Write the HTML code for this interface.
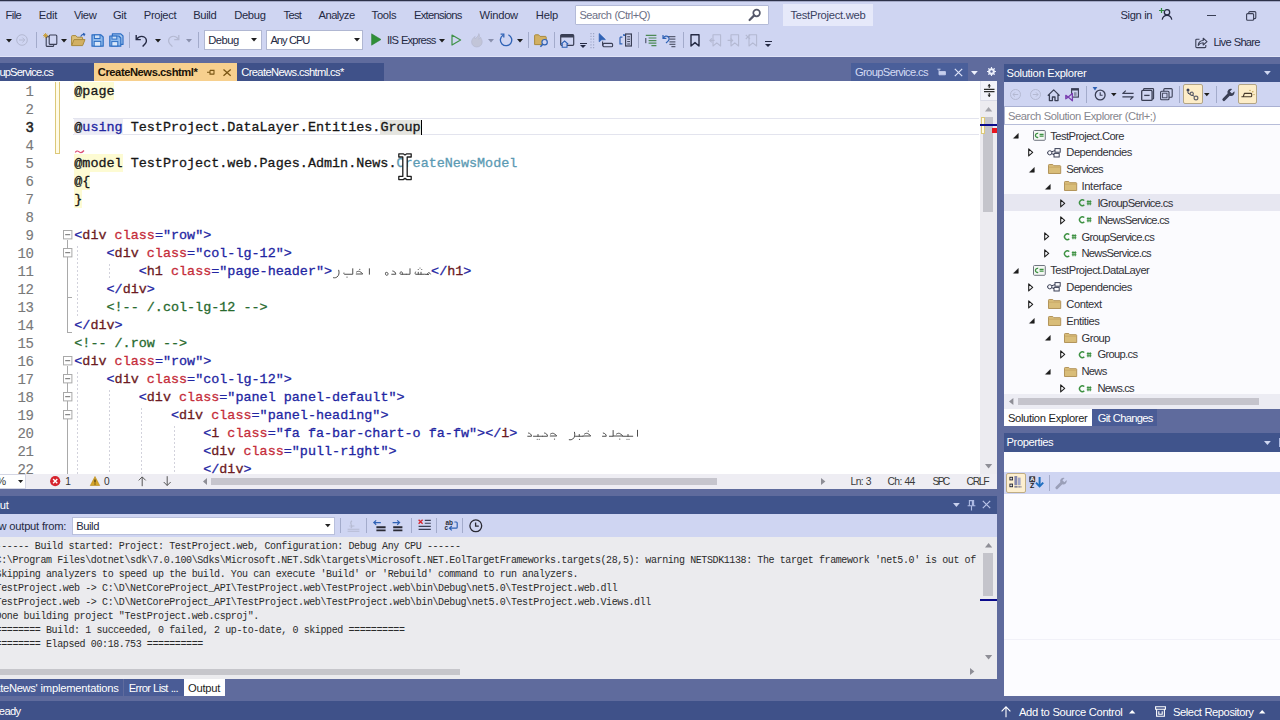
<!DOCTYPE html>
<html>
<head>
<meta charset="utf-8">
<title>TestProject.web - Microsoft Visual Studio</title>
<style>
*{box-sizing:border-box;margin:0;padding:0}
html,body{width:1280px;height:720px;overflow:hidden;background:#5f6b9d;font-family:"Liberation Sans",sans-serif;font-size:12px;color:#1e1e1e}
body{position:relative}
.a{position:absolute;display:block}
.t{position:absolute;white-space:pre;overflow:visible}
svg{overflow:visible}
.ln{position:absolute;left:0;width:33.6px;text-align:right;font-family:"Liberation Mono",monospace;font-size:14px;letter-spacing:-0.3px;color:#787878;height:18px;line-height:18px;margin-top:1px;-webkit-text-stroke:0.12px currentColor}
.cl{position:absolute;left:74px;height:18px;line-height:18px;font-family:"Liberation Mono",monospace;font-size:13.43px;white-space:pre;color:#161616;-webkit-text-stroke:0.3px currentColor}
.cl span{-webkit-text-stroke:0.3px currentColor}
.b{color:#2225a2}.m{color:#6b1a22}.r{color:#c52c3a}.g{color:#276a2e}.tl{color:#5b9ab3}
.hl{background:#fbf7dc}
.ol{position:absolute;left:-15.6px;height:14px;line-height:14px;font-family:"Liberation Mono",monospace;font-size:10px;letter-spacing:-0.4px;white-space:pre;color:#2a2a2a}
</style>
</head>
<body>
<!-- s_top -->
<div class="a" style="left:0px;top:0px;width:1280px;height:57px;background:#cfd5f2;"></div>
<div class="a" style="left:0px;top:0px;width:1280px;height:1px;background:#2d3149;"></div>
<div class="a" style="left:0px;top:1px;width:1280px;height:1px;background:#a4aac8;"></div>
<div class="a" style="left:0px;top:56px;width:1280px;height:1px;background:#dfe3f7;"></div>
<div class="t" style="left:5.60px;top:7.00px;height:16px;line-height:16px;font-size:11.2px;color:#252a44;letter-spacing:-0.611px;">File</div>
<div class="t" style="left:38.80px;top:7.00px;height:16px;line-height:16px;font-size:11.2px;color:#252a44;letter-spacing:-0.275px;">Edit</div>
<div class="t" style="left:74.00px;top:7.00px;height:16px;line-height:16px;font-size:11.2px;color:#252a44;letter-spacing:-0.443px;">View</div>
<div class="t" style="left:113.00px;top:7.00px;height:16px;line-height:16px;font-size:11.2px;color:#252a44;letter-spacing:-0.337px;">Git</div>
<div class="t" style="left:143.80px;top:7.00px;height:16px;line-height:16px;font-size:11.2px;color:#252a44;letter-spacing:-0.351px;">Project</div>
<div class="t" style="left:193.20px;top:7.00px;height:16px;line-height:16px;font-size:11.2px;color:#252a44;letter-spacing:-0.361px;">Build</div>
<div class="t" style="left:234.20px;top:7.00px;height:16px;line-height:16px;font-size:11.2px;color:#252a44;letter-spacing:-0.320px;">Debug</div>
<div class="t" style="left:283.60px;top:7.00px;height:16px;line-height:16px;font-size:11.2px;color:#252a44;letter-spacing:-0.710px;">Test</div>
<div class="t" style="left:318.60px;top:7.00px;height:16px;line-height:16px;font-size:11.2px;color:#252a44;letter-spacing:-0.549px;">Analyze</div>
<div class="t" style="left:371.60px;top:7.00px;height:16px;line-height:16px;font-size:11.2px;color:#252a44;letter-spacing:-0.269px;">Tools</div>
<div class="t" style="left:414.00px;top:7.00px;height:16px;line-height:16px;font-size:11.2px;color:#252a44;letter-spacing:-0.718px;">Extensions</div>
<div class="t" style="left:479.60px;top:7.00px;height:16px;line-height:16px;font-size:11.2px;color:#252a44;letter-spacing:-0.239px;">Window</div>
<div class="t" style="left:535.80px;top:7.00px;height:16px;line-height:16px;font-size:11.2px;color:#252a44;letter-spacing:-0.208px;">Help</div>
<div class="a" style="left:575px;top:4.8px;width:193.5px;height:19.8px;background:#ffffff;border:1px solid #b4bbd8;border-radius:1px"></div>
<div class="t" style="left:579.50px;top:7.50px;height:15px;line-height:15px;font-size:11px;color:#6d7086;letter-spacing:-0.474px;word-spacing:0.284px;">Search (Ctrl+Q)</div>
<svg class="a" style="left:748px;top:8px;" width="14" height="14" viewBox="0 0 14 14"><circle cx="8.6" cy="5" r="3.3" fill="none" stroke="#55586a" stroke-width="1.7"/><path d="M6.2 7.4 L1.6 12" stroke="#55586a" stroke-width="2.2" stroke-linecap="round"/></svg>
<div class="a" style="left:783px;top:4px;width:89.5px;height:22px;background:#e6e9fa;"></div>
<div class="t" style="left:790.50px;top:7.30px;height:16px;line-height:16px;font-size:11.2px;color:#3a4262;letter-spacing:-0.270px;">TestProject.web</div>
<div class="t" style="left:1120.60px;top:7.00px;height:16px;line-height:16px;font-size:11.2px;color:#252a44;letter-spacing:-0.444px;word-spacing:0.267px;">Sign in</div>
<svg class="a" style="left:1158px;top:7px;" width="15" height="14" viewBox="0 0 15 14"><path d="M3.5 1v5M1 3.5h5" stroke="#2e8b3d" stroke-width="1.2"/><circle cx="9" cy="5.3" r="2.7" fill="none" stroke="#252a44" stroke-width="1.3"/><path d="M4.2 12.6c.6-3 2.6-4.2 4.8-4.2s4.2 1.2 4.8 4.2" fill="none" stroke="#252a44" stroke-width="1.3"/></svg>
<div class="a" style="left:1206.5px;top:15px;width:9px;height:1.2px;background:#3a3f55;"></div>
<svg class="a" style="left:1246px;top:11px;" width="11" height="10" viewBox="0 0 11 10"><rect x="0.6" y="2.6" width="7" height="6.6" rx="1" fill="none" stroke="#3a3f55" stroke-width="1.1"/><path d="M2.8 2.4V1.6a1 1 0 0 1 1-1h5a1 1 0 0 1 1 1v5a1 1 0 0 1-1 1H7.8" fill="none" stroke="#3a3f55" stroke-width="1.1"/></svg>
<svg class="a" style="left:1195px;top:36px;" width="13" height="13" viewBox="0 0 13 13"><path d="M4.5 3.2H1.7a.9.9 0 0 0-.9.9v6.6a.9.9 0 0 0 .9.9h8.2a.9.9 0 0 0 .9-.9V9" fill="none" stroke="#3a3f55" stroke-width="1.1"/><path d="M3.2 9.4c.3-3 2.2-4.8 5-4.9V2.2L12 5.6 8.2 9V6.8C6 6.8 4.4 7.6 3.2 9.4z" fill="none" stroke="#3a3f55" stroke-width="1.1" stroke-linejoin="round"/></svg>
<div class="t" style="left:1213.40px;top:33.60px;height:16px;line-height:16px;font-size:11.2px;color:#252a44;letter-spacing:-0.760px;word-spacing:0.456px;">Live Share</div>
<div class="a" style="left:0;top:-1px;width:1280px;height:0"><svg class="a" style="left:5.80px;top:39.75px" width="6" height="3.5" viewBox="0 0 6 3.5"><path d="M0 0h6L3 3.5z" fill="#1e1e1e"/></svg>
<svg class="a" style="left:16px;top:35px;" width="12" height="12" viewBox="0 0 12 12"><circle cx="6" cy="6" r="5.3" fill="none" stroke="#b4b9d2" stroke-width="1"/><path d="M3 6h5.6M6.4 3.6 8.8 6 6.4 8.4" fill="none" stroke="#b4b9d2" stroke-width="1"/></svg>
<div class="a" style="left:36px;top:32.5px;width:1px;height:16px;background:#a3abcb;"></div>
<svg class="a" style="left:43px;top:33.5px;" width="15" height="15" viewBox="0 0 15 15"><rect x="3.2" y="3.8" width="7.5" height="9.6" rx="1" fill="#cfd5f2" stroke="#3a3f55" stroke-width="1.1"/><rect x="6.2" y="2" width="7.6" height="9.4" rx="1" fill="#cfd5f2" stroke="#3a3f55" stroke-width="1.1"/><path d="M2.6 0v5.2M0 2.6h5.2M.8.8l3.6 3.6M4.4.8.8 4.4" stroke="#c89b2c" stroke-width="0.9"/></svg>
<svg class="a" style="left:61.00px;top:39.75px" width="6" height="3.5" viewBox="0 0 6 3.5"><path d="M0 0h6L3 3.5z" fill="#1e1e1e"/></svg>
<svg class="a" style="left:71px;top:34px;" width="15" height="14" viewBox="0 0 15 14"><path d="M.6 12.4V3.4a.8.8 0 0 1 .8-.8h3.4l1.4 1.6h4.6a.8.8 0 0 1 .8.8v1.6" fill="#dcc07a" stroke="#a98a3d" stroke-width="1"/><path d="M.7 12.6 3 6.6h11l-2.4 6z" fill="#d2b063" stroke="#a98a3d" stroke-width="1" stroke-linejoin="round"/><path d="M9.6 3.4c1-1.8 2.4-2.4 4-2.2M12 .2l1.8 1-1 1.8" fill="none" stroke="#2f62b5" stroke-width="1.1"/></svg>
<svg class="a" style="left:90.5px;top:34.5px;" width="13" height="13" viewBox="0 0 13 13"><path d="M1 .8h9l2.2 2.2v9.2H1z" fill="#8fbaec" stroke="#2f6fc4" stroke-width="1.2" stroke-linejoin="round"/><rect x="3.4" y=".9" width="5.6" height="3.6" fill="#cfe0f7" stroke="#2f6fc4" stroke-width="1"/><rect x="3.2" y="7.4" width="6.6" height="4.8" fill="#dbe8fa" stroke="#2f6fc4" stroke-width="1"/></svg>
<svg class="a" style="left:109px;top:34px;" width="15" height="14" viewBox="0 0 15 14"><path d="M3.4.8h8.4L14 3v8.4H3.4z" fill="#a9c9f1" stroke="#2f6fc4" stroke-width="1.2" stroke-linejoin="round"/><path d="M.8 3h9l2 2v8.2H.8z" fill="#8fbaec" stroke="#2f6fc4" stroke-width="1.2" stroke-linejoin="round"/><rect x="3" y="3.1" width="4.8" height="3" fill="#cfe0f7" stroke="#2f6fc4" stroke-width="1"/><rect x="2.8" y="8.6" width="6" height="4.4" fill="#dbe8fa" stroke="#2f6fc4" stroke-width="1"/></svg>
<div class="a" style="left:129px;top:32.5px;width:1px;height:16px;background:#a3abcb;"></div>
<svg class="a" style="left:135px;top:34.5px;" width="13" height="13" viewBox="0 0 13 13"><path d="M1.2 1v4.6h4.6" fill="none" stroke="#252a44" stroke-width="1.4"/><path d="M1.6 5.2C3.4 2.6 6.6 1.6 9.2 3c2.6 1.4 2.8 4.6 1.2 6.6L7.6 12.6" fill="none" stroke="#252a44" stroke-width="1.4"/></svg>
<svg class="a" style="left:155.00px;top:39.75px" width="6" height="3.5" viewBox="0 0 6 3.5"><path d="M0 0h6L3 3.5z" fill="#1e1e1e"/></svg>
<svg class="a" style="left:167px;top:34.5px;" width="13" height="13" viewBox="0 0 13 13"><path d="M11.8 1v4.6H7.2" fill="none" stroke="#b4b9d2" stroke-width="1.3"/><path d="M11.4 5.2C9.6 2.6 6.4 1.6 3.8 3 1.2 4.4 1 7.600000000000001 2.6 9.6L5.4 12.6" fill="none" stroke="#b4b9d2" stroke-width="1.3"/></svg>
<svg class="a" style="left:186.00px;top:39.75px" width="6" height="3.5" viewBox="0 0 6 3.5"><path d="M0 0h6L3 3.5z" fill="#8a90ad"/></svg>
<div class="a" style="left:197.5px;top:32.5px;width:1px;height:16px;background:#a3abcb;"></div>
<div class="a" style="left:204px;top:31px;width:57.5px;height:19.5px;background:#ffffff;border:1px solid #b0b7d2"></div>
<div class="t" style="left:208.20px;top:32.60px;height:16px;line-height:16px;font-size:11.2px;color:#252a44;letter-spacing:-0.480px;">Debug</div>
<svg class="a" style="left:251.30px;top:39.25px" width="6" height="3.5" viewBox="0 0 6 3.5"><path d="M0 0h6L3 3.5z" fill="#1e1e1e"/></svg>
<div class="a" style="left:266.3px;top:31px;width:97px;height:19.5px;background:#ffffff;border:1px solid #b0b7d2"></div>
<div class="t" style="left:270.50px;top:32.60px;height:16px;line-height:16px;font-size:11.2px;color:#252a44;letter-spacing:-1.134px;word-spacing:0.680px;">Any CPU</div>
<svg class="a" style="left:354.00px;top:39.25px" width="6" height="3.5" viewBox="0 0 6 3.5"><path d="M0 0h6L3 3.5z" fill="#1e1e1e"/></svg>
<svg class="a" style="left:370.5px;top:34px;" width="11" height="13" viewBox="0 0 11 13"><path d="M.6.8 10 6.5.6 12.2z" fill="#2f8f38" stroke="#2a7f32" stroke-width=".6" stroke-linejoin="round"/></svg>
<div class="t" style="left:387.00px;top:32.60px;height:16px;line-height:16px;font-size:11.2px;color:#252a44;letter-spacing:-0.842px;word-spacing:0.505px;">IIS Express</div>
<svg class="a" style="left:439.00px;top:39.75px" width="6" height="3.5" viewBox="0 0 6 3.5"><path d="M0 0h6L3 3.5z" fill="#1e1e1e"/></svg>
<svg class="a" style="left:451px;top:34.5px;" width="11" height="12" viewBox="0 0 11 12"><path d="M1 1 9.6 6 1 11z" fill="none" stroke="#3f9247" stroke-width="1.2" stroke-linejoin="round"/></svg>
<svg class="a" style="left:470px;top:33.5px;" width="14" height="15" viewBox="0 0 14 15"><path d="M8.8.6C9 3 6.4 4 5.2 6c-.6-1-.4-1.8 0-2.6C2.8 4.800000000000001 1.4 7 1.6 9.4c.2 2.6 2.4 4.600000000000001 5.2 4.600000000000001 3 0 5.4-2.2 5.4-5 0-2-1-3.2-1.6-4.8-.4 1-1 1.6-1.8 2C9.6 4 9.8 2 8.8.6z" fill="#c2c5d8" stroke="#b2b6cc" stroke-width=".6"/></svg>
<svg class="a" style="left:487.50px;top:39.75px" width="6" height="3.5" viewBox="0 0 6 3.5"><path d="M0 0h6L3 3.5z" fill="#8a90ad"/></svg>
<svg class="a" style="left:499px;top:34px;" width="14" height="14" viewBox="0 0 14 14"><path d="M9.4 1.8A5.7 5.7 0 1 1 4 2.2" fill="none" stroke="#2f62b5" stroke-width="1.3"/><path d="M1.6 1.2h3.2v3.4" fill="none" stroke="#2f62b5" stroke-width="1.3"/></svg>
<svg class="a" style="left:517.00px;top:39.75px" width="6" height="3.5" viewBox="0 0 6 3.5"><path d="M0 0h6L3 3.5z" fill="#1e1e1e"/></svg>
<div class="a" style="left:528px;top:32.5px;width:1px;height:16px;background:#a3abcb;"></div>
<svg class="a" style="left:534px;top:34.5px;" width="16" height="14" viewBox="0 0 16 14"><path d="M.6 10.6V1.6a.8.8 0 0 1 .8-.8h3.2L6 2.400000000000001h5.4a.8.8 0 0 1 .8.8v7.4z" fill="#d2b063" stroke="#a98a3d" stroke-width="1"/><circle cx="10.6" cy="8.2" r="2.7" fill="#cfd5f2" stroke="#2f62b5" stroke-width="1.2"/><path d="M8.8 10.2 6.4 12.8" stroke="#2f62b5" stroke-width="1.5"/></svg>
<div class="a" style="left:554px;top:32.5px;width:1px;height:16px;background:#a3abcb;"></div>
<svg class="a" style="left:560px;top:34.5px;" width="15" height="14" viewBox="0 0 15 14"><rect x=".7" y=".7" width="13" height="10.6" rx="1" fill="none" stroke="#3a3f55" stroke-width="1.2"/><path d="M.7 2.2h13" stroke="#3a3f55" stroke-width="2.6"/><path d="M1 10.2 4.6 7l3.6 3.2M2.2 9.6v3.6h4.8V9.6" fill="#cfd5f2" stroke="#2f62b5" stroke-width="1.1"/></svg>
<div class="a" style="left:579.5px;top:44px;width:7px;height:1.2px;background:#252a44;"></div>
<svg class="a" style="left:580.00px;top:46.30px" width="6" height="3" viewBox="0 0 6 3"><path d="M0 0h6L3 3z" fill="#252a44"/></svg>
<svg class="a" style="left:589.5px;top:32.5px;" width="5" height="18" viewBox="0 0 5 18"><path d="M1 1v16M3.6 1v16" stroke="#9ea6c6" stroke-width="1.2" stroke-dasharray="1.2 1.6"/></svg>
<svg class="a" style="left:597.5px;top:34px;" width="16" height="15" viewBox="0 0 16 15"><path d="M1.2.6v8.2l2.4-2 3.800000000000001-.2z" fill="#2f62b5" stroke="#2f62b5" stroke-width=".8" stroke-linejoin="round"/><path d="M4.6 8.600000000000001v3.6h2" fill="none" stroke="#3a3f55" stroke-width="1.1"/><rect x="5" y="10.4" width="9.6" height="3.4" rx="1" fill="#cfd5f2" stroke="#3a3f55" stroke-width="1.1"/></svg>
<svg class="a" style="left:618.5px;top:34px;" width="14" height="14" viewBox="0 0 14 14"><path d="M1 4.2v6.6h2.4M1 4.2h2.4" fill="none" stroke="#2f62b5" stroke-width="1.2"/><path d="M4.2 1.2 6 3M6 1.2 4.2 3" stroke="#2f62b5" stroke-width="1"/><rect x="6.6" y="1" width="5.8" height="12" fill="none" stroke="#3a3f55" stroke-width="1.2"/><path d="M8.2 3.8h2.8M8.2 6.2h2.8M8.2 8.600000000000001h2.8M8.2 11h2.8" stroke="#3a3f55" stroke-width="1"/></svg>
<div class="a" style="left:637.5px;top:32.5px;width:1px;height:16px;background:#a3abcb;"></div>
<svg class="a" style="left:644.5px;top:35px;" width="12" height="12" viewBox="0 0 12 12"><path d="M.8 1.4h10.6M3.6 4h7.8M3.6 6.6h7.8M3.6 9.200000000000001h7.8M6.4 11.600000000000001h5" stroke="#4d8a55" stroke-width="1.2"/><path d="M.8 4v5.2" stroke="#3a3f55" stroke-width="1"/></svg>
<svg class="a" style="left:662px;top:34.5px;" width="14" height="13" viewBox="0 0 14 13"><path d="M5.4 2.6h8M7.4 5.2h6M7.4 7.800000000000001h6M7.4 10.4h6M9.4 12.600000000000001h4" stroke="#5a5f75" stroke-width="1.2"/><path d="M1 1v3.4h3.4M1.4 4C2.6 2 4.8 1.6 6.2 2.8s1 3.4-.4 4.6L4 9" fill="none" stroke="#2f62b5" stroke-width="1.2"/></svg>
<div class="a" style="left:682.5px;top:32.5px;width:1px;height:16px;background:#a3abcb;"></div>
<svg class="a" style="left:690px;top:34.5px;" width="10" height="13" viewBox="0 0 10 13"><path d="M1 .8h8v11.2L5 8.600000000000001 1 12z" fill="none" stroke="#252a44" stroke-width="1.4" stroke-linejoin="round"/></svg>
<svg class="a" style="left:708.5px;top:34.5px;" width="13" height="13" viewBox="0 0 13 13"><path d="M4 .8h7.6v11.2L7.8 8.8 4 12z" fill="none" stroke="#b4b9d2" stroke-width="1.1" stroke-linejoin="round"/><path d="M5.6 6.4H.8M2.800000000000001 4.4.8 6.4l2 2" fill="none" stroke="#b4b9d2" stroke-width="1.1"/></svg>
<svg class="a" style="left:727px;top:34.5px;" width="13" height="13" viewBox="0 0 13 13"><path d="M4 .8h7.6v11.2L7.8 8.8 4 12z" fill="none" stroke="#b4b9d2" stroke-width="1.1" stroke-linejoin="round"/><path d="M.6 6.4h5M3.6 4.4l2 2-2 2" fill="none" stroke="#b4b9d2" stroke-width="1.1"/></svg>
<svg class="a" style="left:745px;top:34.5px;" width="13" height="13" viewBox="0 0 13 13"><path d="M4 .8h7.6v11.2L7.8 8.8 4 12z" fill="none" stroke="#b4b9d2" stroke-width="1.1" stroke-linejoin="round"/><path d="M.8.8 5 5M5 .8.8 5" stroke="#b4b9d2" stroke-width="1.1"/></svg>
<div class="a" style="left:764.5px;top:42.2px;width:7px;height:1.2px;background:#252a44;"></div>
<svg class="a" style="left:765.00px;top:44.50px" width="6" height="3" viewBox="0 0 6 3"><path d="M0 0h6L3 3z" fill="#252a44"/></svg></div>
<!-- s_tabs -->
<div class="a" style="left:0px;top:63.3px;width:94px;height:17.4px;background:#3f5189;"></div>
<div class="t" style="left:-0.60px;top:64.00px;height:16px;line-height:16px;font-size:11.2px;color:#ffffff;letter-spacing:-0.876px;">upService.cs</div>
<div class="a" style="left:94px;top:63.3px;width:143px;height:17.7px;background:#f7d08e;"></div>
<div class="t" style="left:97.80px;top:64.00px;height:16px;line-height:16px;font-size:11.2px;color:#1a1208;letter-spacing:-0.444px;font-weight:bold;">CreateNews.cshtml*</div>
<svg class="a" style="left:206.8px;top:68.6px;" width="8" height="7.4" viewBox="0 0 8 7.4"><path d="M0 3.2h3M3 1.2v4.6M3 1.4h4v3.6H3M3 5.200000000000001h4" fill="none" stroke="#7a5614" stroke-width="1.1"/></svg>
<svg class="a" style="left:223.2px;top:69px;" width="8.2" height="7.2" viewBox="0 0 8.2 7.2"><path d="M.5.5l7.2 6.2M7.7.5.5 6.7" stroke="#7a5614" stroke-width="1.3"/></svg>
<div class="a" style="left:237px;top:63.3px;width:147px;height:17.4px;background:#3f5189;"></div>
<div class="t" style="left:241.20px;top:64.00px;height:16px;line-height:16px;font-size:11.2px;color:#ffffff;letter-spacing:-0.627px;">CreateNews.cshtml.cs*</div>
<div class="a" style="left:851px;top:63.3px;width:117.4px;height:17.4px;background:#4a5f9a;"></div>
<div class="t" style="left:855.00px;top:64.00px;height:16px;line-height:16px;font-size:11.2px;color:#d3daf3;letter-spacing:-0.652px;">GroupService.cs</div>
<svg class="a" style="left:937px;top:68px;" width="9" height="8" viewBox="0 0 9 8"><path d="M.4 1.2h3.2M2 1.2v2.4M2 3.6h6.4v3.2H2z" fill="#c6cfee" stroke="#c6cfee" stroke-width=".9"/></svg>
<svg class="a" style="left:954px;top:67.5px;" width="9" height="9" viewBox="0 0 9 9"><path d="M.8.8l7.4 7.4M8.2.8.8 8.2" stroke="#dde3f8" stroke-width="1.2"/></svg>
<svg class="a" style="left:971.20px;top:70.80px" width="6.8" height="4" viewBox="0 0 6.8 4"><path d="M0 0h6.8L3.4 4z" fill="#eef1fc"/></svg>
<svg class="a" style="left:986.5px;top:67px;" width="9" height="9" viewBox="0 0 9 9"><circle cx="4.5" cy="4.5" r="2.6" fill="none" stroke="#eef1fc" stroke-width="1.5"/><path d="M4.5 0v9M0 4.5h9M1.3 1.3l6.4 6.4M7.7 1.3 1.3 7.7" stroke="#eef1fc" stroke-width="1.1"/><circle cx="4.5" cy="4.5" r="1.2" fill="#5f6b9d"/></svg>
<!-- s_editor -->
<div class="a" style="left:0px;top:80.6px;width:980.3px;height:393.4px;background:#ffffff;"></div>
<div class="a" style="left:72.5px;top:118.3px;width:906.5px;height:17.2px;background:#ffffff;border-top:1px solid #e3e4ee;border-bottom:1px solid #e3e4ee"></div>
<div class="a" style="left:54.6px;top:81.5px;width:5.4px;height:72.3px;background:#fffbe6;border:1px solid #dcc878;border-top:none"></div>
<div class="a" style="left:73.6px;top:82px;width:40.900000000000006px;height:18px;background:#fdfbd3;"></div>
<div class="a" style="left:73.6px;top:119px;width:48.96px;height:16px;background:#ececf5;"></div>
<div class="a" style="left:73.6px;top:154px;width:48.96px;height:18px;background:#fdfbd3;"></div>
<div class="a" style="left:73.6px;top:172px;width:16.720000000000002px;height:18px;background:#fdfbd3;"></div>
<div class="a" style="left:73.6px;top:190px;width:8.66px;height:18px;background:#fdfbd3;"></div>
<div class="ln" style="top:82px;">1</div>
<div class="ln" style="top:100px;">2</div>
<div class="ln" style="top:118px;color:#222;-webkit-text-stroke:0.5px #222;">3</div>
<div class="ln" style="top:136px;">4</div>
<div class="ln" style="top:154px;">5</div>
<div class="ln" style="top:172px;">6</div>
<div class="ln" style="top:190px;">7</div>
<div class="ln" style="top:208px;">8</div>
<div class="ln" style="top:226px;">9</div>
<div class="ln" style="top:244px;">10</div>
<div class="ln" style="top:262px;">11</div>
<div class="ln" style="top:280px;">12</div>
<div class="ln" style="top:298px;">13</div>
<div class="ln" style="top:316px;">14</div>
<div class="ln" style="top:334px;">15</div>
<div class="ln" style="top:352px;">16</div>
<div class="ln" style="top:370px;">17</div>
<div class="ln" style="top:388px;">18</div>
<div class="ln" style="top:406px;">19</div>
<div class="ln" style="top:424px;">20</div>
<div class="ln" style="top:442px;">21</div>
<div class="ln" style="top:460px;">22</div>
<div class="cl" style="top:82.6px;left:74.3px">@page</div>
<div class="cl" style="top:118.6px;left:74.3px">@<span class="b">using</span> TestProject.DataLayer.Entities.<span style="background:#e5e5e0">Group</span></div>
<div class="cl" style="top:154.6px;left:74.3px">@model TestProject.web.Pages.Admin.News.<span class="tl">CreateNewsModel</span></div>
<div class="cl" style="top:172.6px;left:74.3px">@{</div>
<div class="cl" style="top:190.6px;left:74.3px">}</div>
<div class="cl" style="top:226.6px;left:74.3px"><span class="b">&lt;</span><span class="m">div</span> <span class="r">class</span><span class="b">="row"</span><span class="b">&gt;</span></div>
<div class="cl" style="top:244.6px;left:74.3px">    <span class="b">&lt;</span><span class="m">div</span> <span class="r">class</span><span class="b">="col-lg-12"</span><span class="b">&gt;</span></div>
<div class="cl" style="top:262.6px;left:74.3px">        <span class="b">&lt;</span><span class="m">h1</span> <span class="r">class</span><span class="b">="page-header"</span><span class="b">&gt;</span><span style="display:inline-block;width:99px"></span><span class="b">&lt;/</span><span class="m">h1</span><span class="b">&gt;</span></div>
<div class="cl" style="top:280.6px;left:74.3px">    <span class="b">&lt;/</span><span class="m">div</span><span class="b">&gt;</span></div>
<div class="cl" style="top:298.6px;left:74.3px">    <span class="g">&lt;!-- /.col-lg-12 --&gt;</span></div>
<div class="cl" style="top:316.6px;left:74.3px"><span class="b">&lt;/</span><span class="m">div</span><span class="b">&gt;</span></div>
<div class="cl" style="top:334.6px;left:74.3px"><span class="g">&lt;!-- /.row --&gt;</span></div>
<div class="cl" style="top:352.6px;left:74.3px"><span class="b">&lt;</span><span class="m">div</span> <span class="r">class</span><span class="b">="row"</span><span class="b">&gt;</span></div>
<div class="cl" style="top:370.6px;left:74.3px">    <span class="b">&lt;</span><span class="m">div</span> <span class="r">class</span><span class="b">="col-lg-12"</span><span class="b">&gt;</span></div>
<div class="cl" style="top:388.6px;left:74.3px">        <span class="b">&lt;</span><span class="m">div</span> <span class="r">class</span><span class="b">="panel panel-default"</span><span class="b">&gt;</span></div>
<div class="cl" style="top:406.6px;left:74.3px">            <span class="b">&lt;</span><span class="m">div</span> <span class="r">class</span><span class="b">="panel-heading"</span><span class="b">&gt;</span></div>
<div class="cl" style="top:424.6px;left:74.3px">                <span class="b">&lt;</span><span class="m">i</span> <span class="r">class</span><span class="b">="fa fa-bar-chart-o fa-fw"</span><span class="b">&gt;</span><span class="b">&lt;/</span><span class="m">i</span><span class="b">&gt;</span></div>
<div class="cl" style="top:442.6px;left:74.3px">                <span class="b">&lt;</span><span class="m">div</span> <span class="r">class</span><span class="b">="pull-right"</span><span class="b">&gt;</span></div>
<div class="cl" style="top:460.6px;left:74.3px">                <span class="b">&lt;/</span><span class="m">div</span><span class="b">&gt;</span></div>
<div class="a" style="left:420.58000000000004px;top:120px;width:1.2px;height:15px;background:#000;"></div>
<svg class="a" style="left:74.5px;top:150px;" width="9.4" height="4" viewBox="0 0 9.4 4"><path d="M.3 2.6C1.2.8 2.6.5 3.8 1.7S6.6 3.3 9 .5" fill="none" stroke="#dc4f74" stroke-width="1.2"/></svg>
<div class="a" style="left:67px;top:240px;width:1px;height:91.5px;background:#a9a9a9;"></div>
<div class="a" style="left:67px;top:331.5px;width:5px;height:1px;background:#a9a9a9;"></div>
<div class="a" style="left:67px;top:296.5px;width:5px;height:1px;background:#a9a9a9;"></div>
<div class="a" style="left:67px;top:366px;width:1px;height:108px;background:#a9a9a9;"></div>
<svg class="a" style="left:62.8px;top:230.1px;" width="9.4" height="9.4" viewBox="0 0 9.4 9.4"><rect x=".5" y=".5" width="8.4" height="8.4" fill="#fff" stroke="#a9a9a9" stroke-width="1"/><path d="M2.2 4.7h5" stroke="#6a6a6a" stroke-width="1"/></svg>
<svg class="a" style="left:62.8px;top:248.1px;" width="9.4" height="9.4" viewBox="0 0 9.4 9.4"><rect x=".5" y=".5" width="8.4" height="8.4" fill="#fff" stroke="#a9a9a9" stroke-width="1"/><path d="M2.2 4.7h5" stroke="#6a6a6a" stroke-width="1"/></svg>
<svg class="a" style="left:62.8px;top:356.09999999999997px;" width="9.4" height="9.4" viewBox="0 0 9.4 9.4"><rect x=".5" y=".5" width="8.4" height="8.4" fill="#fff" stroke="#a9a9a9" stroke-width="1"/><path d="M2.2 4.7h5" stroke="#6a6a6a" stroke-width="1"/></svg>
<svg class="a" style="left:62.8px;top:374.09999999999997px;" width="9.4" height="9.4" viewBox="0 0 9.4 9.4"><rect x=".5" y=".5" width="8.4" height="8.4" fill="#fff" stroke="#a9a9a9" stroke-width="1"/><path d="M2.2 4.7h5" stroke="#6a6a6a" stroke-width="1"/></svg>
<svg class="a" style="left:62.8px;top:392.09999999999997px;" width="9.4" height="9.4" viewBox="0 0 9.4 9.4"><rect x=".5" y=".5" width="8.4" height="8.4" fill="#fff" stroke="#a9a9a9" stroke-width="1"/><path d="M2.2 4.7h5" stroke="#6a6a6a" stroke-width="1"/></svg>
<svg class="a" style="left:62.8px;top:410.09999999999997px;" width="9.4" height="9.4" viewBox="0 0 9.4 9.4"><rect x=".5" y=".5" width="8.4" height="8.4" fill="#fff" stroke="#a9a9a9" stroke-width="1"/><path d="M2.2 4.7h5" stroke="#6a6a6a" stroke-width="1"/></svg>
<div class="a" style="left:76.8px;top:246px;width:1px;height:70px;background:repeating-linear-gradient(to bottom,#d2d2dc 0,#d2d2dc 2px,transparent 2px,transparent 4px)"></div>
<div class="a" style="left:109.1px;top:264px;width:1px;height:16px;background:repeating-linear-gradient(to bottom,#d2d2dc 0,#d2d2dc 2px,transparent 2px,transparent 4px)"></div>
<div class="a" style="left:76.8px;top:372px;width:1px;height:106px;background:repeating-linear-gradient(to bottom,#d2d2dc 0,#d2d2dc 2px,transparent 2px,transparent 4px)"></div>
<div class="a" style="left:109.1px;top:390px;width:1px;height:88px;background:repeating-linear-gradient(to bottom,#d2d2dc 0,#d2d2dc 2px,transparent 2px,transparent 4px)"></div>
<div class="a" style="left:141.3px;top:408px;width:1px;height:70px;background:repeating-linear-gradient(to bottom,#d2d2dc 0,#d2d2dc 2px,transparent 2px,transparent 4px)"></div>
<div class="a" style="left:173.6px;top:426px;width:1px;height:52px;background:repeating-linear-gradient(to bottom,#d2d2dc 0,#d2d2dc 2px,transparent 2px,transparent 4px)"></div>
<svg class="a" style="left:320px;top:258px;" width="160" height="24" viewBox="0 0 1280 192"><g fill="none" stroke="#4d4d4d" stroke-width="8" stroke-linecap="round" stroke-linejoin="round"><path d="M150 98c6 22 2 42-14 54-8 6-18 8-28 6"/><path d="M262 86v44H196c-4 0-6-4-5-10"/><path d="M292 112c10-8 22-8 34 0l16 16h-52"/><path d="M395 86v44"/><path d="M524 122a11 11 0 1 0 20 2c-2-8-10-12-18-8"/><path d="M582 104c14 2 24 12 24 26h-32"/><path d="M690 130h-44c-8 0-10-14 0-18 10-4 18 6 14 18"/><path d="M720 86v44h-30"/><path d="M832 130h-68c-4-2-4-10 0-18m22 18v-16m22 16v-16"/><path d="M884 128c-4-12-18-14-24-4-4 8 2 10 10 8l-32-2"/></g><g fill="#4d4d4d"><circle cx="216" cy="152" r="5"/><circle cx="318" cy="90" r="5"/><circle cx="786" cy="92" r="4.5"/><circle cx="800" cy="80" r="4.5"/><circle cx="814" cy="92" r="4.5"/></g></svg><svg class="a" style="left:500px;top:420px;" width="160" height="24" viewBox="0 0 1280 192"><g fill="none" stroke="#4d4d4d" stroke-width="8" stroke-linecap="round" stroke-linejoin="round"><path d="M228 104c14 2 24 12 24 26h-30"/><path d="M340 130h-72m36 0v-14"/><path d="M356 104c14 2 24 12 24 26h-40"/><path d="M404 112c10-8 22-8 34 0l16 16h-52"/><path d="M596 98c6 22 2 42-14 54-8 6-18 8-28 6"/><path d="M664 130h-60m30 0v-14"/><path d="M676 112c10-8 22-8 34 0l16 16h-62"/><path d="M826 104c14 2 24 12 24 26h-30"/><path d="M905 84v46h-30"/><path d="M932 112c10-8 22-8 34 0l16 16h-76"/><path d="M1062 130h-80m42 0v-14"/><path d="M1100 82v48"/></g><g fill="#4d4d4d"><circle cx="298" cy="154" r="4.5"/><circle cx="314" cy="154" r="4.5"/><circle cx="436" cy="152" r="5"/><circle cx="636" cy="154" r="5"/><circle cx="706" cy="88" r="5"/><circle cx="958" cy="152" r="5"/><circle cx="1016" cy="154" r="4.5"/><circle cx="1032" cy="154" r="4.5"/></g></svg>
<svg class="a" style="left:397.5px;top:152.5px;" width="14" height="27.4" viewBox="0 0 14 27.4"><path d="M.8.8h4.4l1.8 1.2 1.8-1.2h4.4v3.2H9.2v19.4h4v3.2H8.8L7 25.4l-1.8 1.2H.8v-3.2h4V4H.8z" fill="#fff" stroke="#1e1e1e" stroke-width="1.3" stroke-linejoin="round"/></svg>
<div class="a" style="left:980.3px;top:80.6px;width:16.5px;height:393.4px;background:#ecebf0;"></div>
<div class="a" style="left:980.3px;top:80.6px;width:16.5px;height:20.2px;background:#f3f3fa;border-bottom:1px solid #d9dae6;border-left:1px solid #e2e3ee"></div>
<svg class="a" style="left:983.5px;top:84px;" width="10.5" height="13" viewBox="0 0 10.5 13"><path d="M0 5.4h10.5M0 7.6h10.5" stroke="#2a2a2a" stroke-width="1.1"/><path d="M5.25 0v4M5.25 9v4" stroke="#2a2a2a" stroke-width="1.1"/><path d="M3.4 2.2 5.25.2 7.1 2.2zM3.4 10.8l1.85 2 1.85-2z" fill="#2a2a2a"/></svg>
<svg class="a" style="left:985px;top:106.6px;" width="7.2" height="4.4" viewBox="0 0 7.2 4.4"><path d="M0 4.4 3.6 0l3.6 4.4z" fill="#a3a3aa"/></svg>
<svg class="a" style="left:984.8px;top:463.6px;" width="7.2" height="4.4" viewBox="0 0 7.2 4.4"><path d="M0 0h7.2L3.6 4.4z" fill="#8e8e96"/></svg>
<div class="a" style="left:983.3px;top:116.7px;width:9.8px;height:95.2px;background:#c4c4cb;"></div>
<div class="a" style="left:980.6px;top:116.8px;width:4.8px;height:17.2px;background:#fffbe6;border:1px solid #dcc878"></div>
<div class="a" style="left:980.3px;top:123.8px;width:16.5px;height:2px;background:#0a0a8c;"></div>
<div class="a" style="left:992px;top:128px;width:4.8px;height:4.6px;background:#e8141e;"></div>
<div class="a" style="left:0px;top:473.5px;width:996.8px;height:15.2px;background:#eeedf3;"></div>
<div class="a" style="left:0px;top:474.3px;width:26px;height:14.4px;background:#ffffff;border:1px solid #d4d6e4;border-left:none"></div>
<div class="t" style="left:-3.50px;top:473.90px;height:15px;line-height:15px;font-size:10.8px;color:#333;letter-spacing:-2.904px;">%</div>
<svg class="a" style="left:18.40px;top:480.00px" width="5.2" height="3" viewBox="0 0 5.2 3"><path d="M0 0h5.2L2.6 3z" fill="#222"/></svg>
<svg class="a" style="left:49.5px;top:476px;" width="10.4" height="10.4" viewBox="0 0 10.4 10.4"><circle cx="5.2" cy="5.2" r="5.1" fill="#d6242e"/><path d="M3.1 3.1l4.2 4.2M7.3 3.1 3.1 7.3" stroke="#fff" stroke-width="1.4"/></svg>
<div class="t" style="left:65.30px;top:474.50px;height:14px;line-height:14px;font-size:10.2px;color:#333;letter-spacing:-2.772px;">1</div>
<svg class="a" style="left:90px;top:476px;" width="10" height="10" viewBox="0 0 10 10"><path d="M5 .5 9.7 9.5H.3z" fill="#d5a52a" stroke="#b88a18" stroke-width=".6" stroke-linejoin="round"/><path d="M5 3.4v3.2M5 7.4v1.1" stroke="#3a2a08" stroke-width="1.1"/></svg>
<div class="t" style="left:104.00px;top:474.50px;height:14px;line-height:14px;font-size:10.2px;color:#333;letter-spacing:-0.472px;">0</div>
<svg class="a" style="left:137.8px;top:476.4px;" width="8.4" height="10.4" viewBox="0 0 8.4 10.4"><path d="M4.2 10.2V.9M.7 4.4 4.2.9l3.5 3.5" fill="none" stroke="#555" stroke-width="1"/></svg>
<svg class="a" style="left:162.8px;top:476.4px;" width="8.4" height="10.4" viewBox="0 0 8.4 10.4"><path d="M4.2.2v9.3M.7 6 4.2 9.5 7.700000000000001 6" fill="none" stroke="#555" stroke-width="1"/></svg>
<svg class="a" style="left:202.6px;top:477.6px;" width="4" height="7" viewBox="0 0 4 7"><path d="M4 0v7L0 3.5z" fill="#8e8e96"/></svg>
<div class="a" style="left:211.4px;top:477.8px;width:505.6px;height:7.4px;background:#c6c5cd;"></div>
<svg class="a" style="left:821.3px;top:477.6px;" width="4.4" height="7" viewBox="0 0 4.4 7"><path d="M0 0v7l4.4-3.5z" fill="#8e8e96"/></svg>
<div class="t" style="left:850.50px;top:474.30px;height:15px;line-height:15px;font-size:10.4px;color:#3a3a3a;letter-spacing:-0.620px;word-spacing:0.372px;">Ln: 3</div>
<div class="t" style="left:887.40px;top:474.30px;height:15px;line-height:15px;font-size:10.4px;color:#3a3a3a;letter-spacing:-0.600px;word-spacing:0.360px;">Ch: 44</div>
<div class="t" style="left:932.60px;top:474.30px;height:15px;line-height:15px;font-size:10.4px;color:#3a3a3a;letter-spacing:-1.828px;">SPC</div>
<div class="t" style="left:966.50px;top:474.30px;height:15px;line-height:15px;font-size:10.4px;color:#3a3a3a;letter-spacing:-1.364px;">CRLF</div>
<!-- s_output -->
<div class="a" style="left:0px;top:496px;width:996.8px;height:18.6px;background:#40548c;"></div>
<div class="t" style="left:-24.60px;top:497.40px;height:16px;line-height:16px;font-size:11.2px;color:#ffffff;letter-spacing:-0.003px;">Output</div>
<svg class="a" style="left:952.90px;top:503.20px" width="6.8" height="4" viewBox="0 0 6.8 4"><path d="M0 0h6.8L3.4 4z" fill="#c9d1ee"/></svg>
<svg class="a" style="left:966.5px;top:499.5px;" width="9" height="11" viewBox="0 0 9 11"><path d="M2.4.6h4.2v5.2H2.4zM.6 5.8h7.8M4.5 5.8v4.8" fill="none" stroke="#aebbe3" stroke-width="1.1"/><path d="M5.6.6v5.2" stroke="#aebbe3" stroke-width="1.6"/></svg>
<svg class="a" style="left:981.6px;top:500.4px;" width="9" height="9" viewBox="0 0 9 9"><path d="M.8.8l7.4 7.4M8.2.8.8 8.2" stroke="#b9c4e8" stroke-width="1.2"/></svg>
<div class="a" style="left:0px;top:514.4px;width:996.8px;height:22.8px;background:#cfd5f2;"></div>
<div class="t" style="left:-20.60px;top:517.80px;height:16px;line-height:16px;font-size:11.2px;color:#252a44;letter-spacing:-0.259px;word-spacing:0.155px;">Show output from:</div>
<div class="a" style="left:72px;top:517.4px;width:263.2px;height:17.4px;background:#ffffff;border:1px solid #b9c0dc"></div>
<div class="t" style="left:76.20px;top:517.80px;height:16px;line-height:16px;font-size:11.2px;color:#252a44;letter-spacing:-0.421px;">Build</div>
<svg class="a" style="left:325.20px;top:524.40px" width="5.6" height="3.2" viewBox="0 0 5.6 3.2"><path d="M0 0h5.6L2.8 3.2z" fill="#222"/></svg>
<div class="a" style="left:339.8px;top:517.6px;width:1px;height:15px;background:#a3abcb;"></div>
<svg class="a" style="left:347px;top:519.5px;" width="13" height="12" viewBox="0 0 13 12"><path d="M5 .8c-1.400000000000001 1-1.6 2.6-.6 4.2.8 1.2.6 2.2-.6 3.2M2.4 6h5M.6 9.200000000000001h11.8M.6 11.2h11.8" fill="none" stroke="#b6bbd2" stroke-width="1.1"/></svg>
<div class="a" style="left:365.8px;top:517.6px;width:1px;height:15px;background:#a3abcb;"></div>
<svg class="a" style="left:372.5px;top:519.5px;" width="13" height="12" viewBox="0 0 13 12"><path d="M.8 2.6h7M3.2.4.8 2.6l2.4 2.2" fill="none" stroke="#2f62b5" stroke-width="1.2"/><path d="M3.4 7.2h9.2M3.4 10.4h9.2" stroke="#2a2a34" stroke-width="1.9"/></svg>
<svg class="a" style="left:391px;top:519.5px;" width="13" height="12" viewBox="0 0 13 12"><path d="M1.6 2.6h7M6.2.4l2.4 2.2-2.4 2.2" fill="none" stroke="#2f62b5" stroke-width="1.2"/><path d="M2.2 7.2h9.2M2.2 10.4h9.2" stroke="#2a2a34" stroke-width="1.9"/></svg>
<div class="a" style="left:410.8px;top:517.6px;width:1px;height:15px;background:#a3abcb;"></div>
<svg class="a" style="left:417.5px;top:519px;" width="13" height="13" viewBox="0 0 13 13"><path d="M.6.8l4 4M4.6.8l-4 4" stroke="#d6242e" stroke-width="1.3"/><path d="M6.8 1.4h6M6.8 4.2h6M.6 7.4h12.2M.6 10.4h12.2" stroke="#3a3f55" stroke-width="1.1"/></svg>
<div class="a" style="left:436.3px;top:517.6px;width:1px;height:15px;background:#a3abcb;"></div>
<svg class="a" style="left:443.5px;top:518.5px;" width="14" height="13" viewBox="0 0 14 13"><text x="1.5" y="5.6" font-family="Liberation Sans" font-size="6.4" font-weight="bold" fill="#2a2a34">ab</text><text x=".4" y="11.2" font-family="Liberation Sans" font-size="6.4" font-weight="bold" fill="#2a2a34">c</text><path d="M10.4 3h1.8a1 1 0 0 1 1 1v4.2a1 1 0 0 1-1 1H5.6M7.800000000000001 7 5.4 9.200000000000001l2.4 2.2" fill="none" stroke="#2f62b5" stroke-width="1.2"/></svg>
<div class="a" style="left:462.3px;top:517.6px;width:1px;height:15px;background:#a3abcb;"></div>
<svg class="a" style="left:469px;top:519px;" width="13.6" height="13.6" viewBox="0 0 13.6 13.6"><circle cx="6.8" cy="6.8" r="5.9" fill="none" stroke="#2a2a34" stroke-width="1.3"/><path d="M6.6 3.4v3.8h3.2" fill="none" stroke="#2a2a34" stroke-width="1.3"/></svg>
<div class="a" style="left:0px;top:537.2px;width:996.8px;height:141.4px;background:#ebebee;"></div>
<div class="a" style="left:0;top:537.2px;width:980.3px;height:128px;overflow:hidden">
<div class="ol" style="top:2.4px">1&gt;------ Build started: Project: TestProject.web, Configuration: Debug Any CPU ------</div>
<div class="ol" style="top:16.4px">1&gt;C:\Program Files\dotnet\sdk\7.0.100\Sdks\Microsoft.NET.Sdk\targets\Microsoft.NET.EolTargetFrameworks.targets(28,5): warning NETSDK1138: The target framework 'net5.0' is out of</div>
<div class="ol" style="top:30.4px">1&gt;Skipping analyzers to speed up the build. You can execute 'Build' or 'Rebuild' command to run analyzers.</div>
<div class="ol" style="top:44.4px">1&gt;TestProject.web -&gt; C:\D\NetCoreProject_API\TestProject.web\TestProject.web\bin\Debug\net5.0\TestProject.web.dll</div>
<div class="ol" style="top:58.4px">1&gt;TestProject.web -&gt; C:\D\NetCoreProject_API\TestProject.web\TestProject.web\bin\Debug\net5.0\TestProject.web.Views.dll</div>
<div class="ol" style="top:72.4px">1&gt;Done building project "TestProject.web.csproj".</div>
<div class="ol" style="top:86.4px">========== Build: 1 succeeded, 0 failed, 2 up-to-date, 0 skipped ==========</div>
<div class="ol" style="top:100.4px">========== Elapsed 00:18.753 ==========</div>
</div>
<svg class="a" style="left:984.8px;top:542.6px;" width="7.2" height="4.4" viewBox="0 0 7.2 4.4"><path d="M0 4.4 3.6 0l3.6 4.4z" fill="#8e8e96"/></svg>
<div class="a" style="left:983.3px;top:553.4px;width:9.8px;height:42.6px;background:#c4c4cb;"></div>
<div class="a" style="left:980.3px;top:598.6px;width:16.5px;height:2px;background:#0a0a8c;"></div>
<svg class="a" style="left:984.8px;top:655px;" width="7.2" height="4.4" viewBox="0 0 7.2 4.4"><path d="M0 0h7.2L3.6 4.4z" fill="#8e8e96"/></svg>
<div class="a" style="left:0px;top:668.8px;width:460.4px;height:6.4px;background:#c6c6cb;"></div>
<svg class="a" style="left:970px;top:668.4px;" width="4.4" height="7" viewBox="0 0 4.4 7"><path d="M0 0v7l4.4-3.5z" fill="#8e8e96"/></svg>
<div class="a" style="left:0px;top:678.6px;width:123.4px;height:17.2px;background:#4a5c96;"></div>
<div class="t" style="left:40.60px;top:679.60px;height:16px;line-height:16px;font-size:11.2px;color:#ffffff;letter-spacing:-0.223px;">implementations</div>
<div class="t" style="left:-5.67px;top:679.60px;height:16px;line-height:16px;font-size:11.2px;color:#ffffff;letter-spacing:-0.330px;">ateNews&#x27;</div>
<div class="a" style="left:124.4px;top:678.6px;width:59.4px;height:17.2px;background:#4a5c96;"></div>
<div class="t" style="left:128.80px;top:679.60px;height:16px;line-height:16px;font-size:11.2px;color:#ffffff;letter-spacing:-0.678px;word-spacing:0.407px;">Error List ...</div>
<div class="a" style="left:183.8px;top:678.6px;width:40.8px;height:17.2px;background:#ffffff;"></div>
<div class="t" style="left:188.00px;top:679.60px;height:16px;line-height:16px;font-size:11.2px;color:#1e1e1e;letter-spacing:-0.270px;">Output</div>
<!-- s_solexp -->
<div class="a" style="left:1003.8px;top:63.8px;width:276.20000000000005px;height:18.4px;background:#40548c;"></div>
<div class="t" style="left:1006.50px;top:65.20px;height:16px;line-height:16px;font-size:11.2px;color:#ffffff;letter-spacing:-0.328px;word-spacing:0.197px;">Solution Explorer</div>
<svg class="a" style="left:1263.60px;top:71.40px" width="6.8" height="4" viewBox="0 0 6.8 4"><path d="M0 0h6.8L3.4 4z" fill="#cfd7f2"/></svg>
<div class="a" style="left:1003.8px;top:82.2px;width:276.20000000000005px;height:24px;background:#cfd5f2;"></div>
<svg class="a" style="left:1010.4px;top:89px;" width="11" height="11" viewBox="0 0 11 11"><circle cx="5.5" cy="5.5" r="5" fill="none" stroke="#b4b9d2" stroke-width="1"/><path d="M8.2 5.5H3M5 3.4 2.9 5.5 5 7.6" fill="none" stroke="#b4b9d2" stroke-width="1"/></svg>
<svg class="a" style="left:1029.5px;top:89px;" width="11" height="11" viewBox="0 0 11 11"><circle cx="5.5" cy="5.5" r="5" fill="none" stroke="#b4b9d2" stroke-width="1"/><path d="M2.8 5.5H8M6 3.4l2.1 2.1L6 7.6" fill="none" stroke="#b4b9d2" stroke-width="1"/></svg>
<svg class="a" style="left:1047.4px;top:88.8px;" width="13.4" height="12.4" viewBox="0 0 13.4 12.4"><path d="M.8 6.6 6.7.9l5.9 5.7M2.4 5.4v6.2h3V8h2.6v3.6h3V5.4" fill="none" stroke="#3a3f55" stroke-width="1.3" stroke-linejoin="round"/></svg>
<svg class="a" style="left:1065.4px;top:87.8px;" width="14" height="13.6" viewBox="0 0 14 13.6"><rect x="6.6" y=".7" width="6.8" height="8.4" fill="#cfd5f2" stroke="#3a3f55" stroke-width="1.1"/><path d="M6.6 1.6h6.8" stroke="#3a3f55" stroke-width="1.8"/><path d="M9 4.2h2.6v3.600000000000001H9z" fill="#8b90a8"/><path d="M7.4 5.4v7.4L3.2 9.1zM.8 7.4v3.4l2.4-1.7z" fill="#cfd5f2" stroke="#7a3fb0" stroke-width="1.3" stroke-linejoin="round"/></svg>
<div class="a" style="left:1086px;top:86px;width:1px;height:17px;background:#a3abcb;"></div>
<svg class="a" style="left:1092.6px;top:87px;" width="13" height="14" viewBox="0 0 13 14"><path d="M-.4 0h4.8L2 3.6z" fill="#2f62b5"/><circle cx="7.2" cy="8" r="4.9" fill="none" stroke="#3a3f55" stroke-width="1.3"/><path d="M7.2 5.2v3h2.4" fill="none" stroke="#3a3f55" stroke-width="1.1"/></svg>
<svg class="a" style="left:1111.00px;top:93.20px" width="5.6" height="3.2" viewBox="0 0 5.6 3.2"><path d="M0 0h5.6L2.8 3.2z" fill="#1e1e1e"/></svg>
<svg class="a" style="left:1122.4px;top:89.6px;" width="12" height="10" viewBox="0 0 12 10"><path d="M11.6 3.4H.8L3.8.6M.4 6.800000000000001h10.8l-3 2.8" fill="none" stroke="#3a3f55" stroke-width="1.2" stroke-linejoin="round"/></svg>
<svg class="a" style="left:1140.6px;top:88px;" width="13.4" height="13" viewBox="0 0 13.4 13"><rect x=".7" y="2.4" width="10.4" height="10" rx="1" fill="none" stroke="#3a3f55" stroke-width="1.3"/><path d="M2.6 2.2V1.4a.8.8 0 0 1 .8-.8h8.4a.8.8 0 0 1 .8.8v8.8a.8.8 0 0 1-.8.8h-.6" fill="none" stroke="#3a3f55" stroke-width="1.1"/><path d="M3.2 7.4h5.4" stroke="#3a3f55" stroke-width="1.3"/></svg>
<svg class="a" style="left:1160.2px;top:88.4px;" width="13" height="12.4" viewBox="0 0 13 12.4"><rect x="3.8" y=".6" width="8.4" height="8.6" rx="1" fill="none" stroke="#3a3f55" stroke-width="1.1"/><rect x=".6" y="3.2" width="8.4" height="8.6" rx="1" fill="#cfd5f2" stroke="#3a3f55" stroke-width="1.1"/><rect x="2.6" y="5.2" width="4.4" height="4.6" fill="none" stroke="#3a3f55" stroke-width=".9"/></svg>
<div class="a" style="left:1179.4px;top:86px;width:1px;height:17px;background:#a3abcb;"></div>
<div class="a" style="left:1183.3px;top:84.4px;width:19.6px;height:20px;background:#fdedc8;border:1px solid #b3a586;border-radius:2px"></div>
<svg class="a" style="left:1186.4px;top:88px;" width="13" height="13" viewBox="0 0 13 13"><circle cx="2" cy="2" r="1.5" fill="#3a3f55"/><path d="M2 3.4v1.8l6.2 3" fill="none" stroke="#3a3f55" stroke-width="1"/><rect x="4.2" y="4.2" width="3" height="3" rx=".8" fill="#fdebc6" stroke="#3a3f55" stroke-width="1"/><rect x="8.2" y="8.2" width="3.6" height="3.6" rx=".8" fill="#fdebc6" stroke="#3a3f55" stroke-width="1"/></svg>
<svg class="a" style="left:1204.40px;top:93.20px" width="5.6" height="3.2" viewBox="0 0 5.6 3.2"><path d="M0 0h5.6L2.8 3.2z" fill="#1e1e1e"/></svg>
<div class="a" style="left:1215.5px;top:86px;width:1px;height:17px;background:#a3abcb;"></div>
<svg class="a" style="left:1222px;top:88px;" width="13.4" height="13.4" viewBox="0 0 13.4 13.4"><path d="M12.4 3.2 10 5.6 7.800000000000001 3.4l2.4-2.4a3.6 3.6 0 0 0-4.6 4.600000000000001L.8 10.4a1.5 1.5 0 0 0 2.2 2.2l4.8-4.8a3.6 3.6 0 0 0 4.6-4.6z" fill="#3a3f55"/></svg>
<div class="a" style="left:1238.2px;top:84.4px;width:19.2px;height:20px;background:#fdedc8;border:1px solid #b3a586;border-radius:2px"></div>
<svg class="a" style="left:1240.6px;top:89px;" width="14" height="9" viewBox="0 0 14 9"><path d="M.4 7.800000000000001h2.2M3.4 4.4h6.4a.9.9 0 0 1 .9.9v1.6a.9.9 0 0 1-.9.9H2.2z" fill="none" stroke="#46382a" stroke-width="1.1" stroke-linejoin="round"/><circle cx="9" cy="1.4" r=".7" fill="#b99a4a"/><circle cx="11.8" cy="2.8" r=".7" fill="#b99a4a"/><circle cx="13" cy="5.600000000000001" r=".7" fill="#b99a4a"/></svg>
<div class="a" style="left:1003.8px;top:106.2px;width:276.20000000000005px;height:18.8px;background:#ffffff;border-top:1px solid #a9b0d2;border-bottom:1px solid #b7bdd9;border-left:1px solid #b0b6d4"></div>
<div class="t" style="left:1008.00px;top:108.40px;height:16px;line-height:16px;font-size:11.2px;color:#86868e;letter-spacing:-0.433px;word-spacing:0.260px;">Search Solution Explorer (Ctrl+;)</div>
<div class="a" style="left:1003.8px;top:125px;width:276.20000000000005px;height:269px;background:#fbfbfe;"></div>
<div class="a" style="left:1003.8px;top:194.4px;width:276.20000000000005px;height:16.4px;background:#e7e7f1;"></div>
<div class="a" style="left:1003.8px;top:125px;width:276.20000000000005px;height:269px;overflow:hidden">
<div class="a" style="left:-1003.8px;top:-125px;width:1280px;height:720px">
<svg class="a" style="left:1013.4px;top:133.2px;" width="5.6" height="5.6" viewBox="0 0 5.6 5.6"><path d="M5.3.5v4.8H.5z" fill="#1e1e1e" stroke="#1e1e1e" stroke-width=".5" stroke-linejoin="round"/></svg>
<svg class="a" style="left:1032.8px;top:130.29999999999998px;" width="12.8" height="10.8" viewBox="0 0 12.8 10.8"><rect x=".5" y=".5" width="11.8" height="9.8" rx="1" fill="#f4f7f4" stroke="#6f7480" stroke-width="1"/><path d="M5.2 3.4A2.1 2.1 0 1 0 5.2 7.4" fill="none" stroke="#3d9142" stroke-width="1.3"/><path d="M6.6 4.3h4M6.6 6.2h4" stroke="#3d9142" stroke-width="1.3"/></svg>
<div class="t" style="left:1050.30px;top:127.50px;height:16px;line-height:16px;font-size:11.2px;color:#323238;letter-spacing:-0.568px;">TestProject.Core</div>
<svg class="a" style="left:1028.4px;top:148.14px;" width="5.6" height="8.8" viewBox="0 0 5.6 8.8"><path d="M.7.9v7l4-3.5z" fill="none" stroke="#1e1e1e" stroke-width="1.1" stroke-linejoin="round"/></svg>
<svg class="a" style="left:1047.2px;top:147.73999999999998px;" width="14" height="9.6" viewBox="0 0 14 9.6"><rect x="8" y=".6" width="5.2" height="3.6" fill="none" stroke="#3a3f55" stroke-width="1"/><rect x="7" y="5.4" width="5.2" height="3.6" fill="none" stroke="#3a3f55" stroke-width="1"/><circle cx="2.8" cy="4.8" r="2.1" fill="none" stroke="#3a3f55" stroke-width="1"/><path d="M4.6 3.8 8 2.6M4.8 5.6l2.2 1.2M0 4.8h1" stroke="#3a3f55" stroke-width="1"/></svg>
<div class="t" style="left:1066.30px;top:144.34px;height:16px;line-height:16px;font-size:11.2px;color:#323238;letter-spacing:-0.492px;">Dependencies</div>
<svg class="a" style="left:1029.4px;top:166.88px;" width="5.6" height="5.6" viewBox="0 0 5.6 5.6"><path d="M5.3.5v4.8H.5z" fill="#1e1e1e" stroke="#1e1e1e" stroke-width=".5" stroke-linejoin="round"/></svg>
<svg class="a" style="left:1047.6px;top:164.48px;" width="13.2" height="10" viewBox="0 0 13.2 10"><path d="M.5 9.5V1.2a.7.7 0 0 1 .7-.7h3.6l1.1 1.2h6.1a.7.7 0 0 1 .7.7v7.1z" fill="#d9bd79" stroke="#b3945a" stroke-width="1"/><path d="M.9 3.2h11.4" stroke="#c6a764" stroke-width=".8"/></svg>
<div class="t" style="left:1066.30px;top:161.18px;height:16px;line-height:16px;font-size:11.2px;color:#323238;letter-spacing:-0.806px;">Services</div>
<svg class="a" style="left:1045.4px;top:183.71999999999997px;" width="5.6" height="5.6" viewBox="0 0 5.6 5.6"><path d="M5.3.5v4.8H.5z" fill="#1e1e1e" stroke="#1e1e1e" stroke-width=".5" stroke-linejoin="round"/></svg>
<svg class="a" style="left:1064.0px;top:181.31999999999996px;" width="13.2" height="10" viewBox="0 0 13.2 10"><path d="M.5 9.5V1.2a.7.7 0 0 1 .7-.7h3.6l1.1 1.2h6.1a.7.7 0 0 1 .7.7v7.1z" fill="#d9bd79" stroke="#b3945a" stroke-width="1"/><path d="M.9 3.2h11.4" stroke="#c6a764" stroke-width=".8"/></svg>
<div class="t" style="left:1081.50px;top:178.02px;height:16px;line-height:16px;font-size:11.2px;color:#323238;letter-spacing:-0.353px;">Interface</div>
<svg class="a" style="left:1060.4px;top:198.66px;" width="5.6" height="8.8" viewBox="0 0 5.6 8.8"><path d="M.7.9v7l4-3.5z" fill="none" stroke="#1e1e1e" stroke-width="1.1" stroke-linejoin="round"/></svg>
<svg class="a" style="left:1079.1999999999998px;top:199.46px;" width="13.2" height="7.4" viewBox="0 0 13.2 7.4"><path d="M5.3 1.5A2.9 2.9 0 1 0 5.3 5.9" fill="none" stroke="#3d9142" stroke-width="1.4"/><path d="M7.8 2.6h4.6M7.8 4.8h4.6M9 1.2v5M11.2 1.2v5" stroke="#3d9142" stroke-width="1.1"/></svg>
<div class="t" style="left:1097.40px;top:194.86px;height:16px;line-height:16px;font-size:11.2px;color:#323238;letter-spacing:-0.656px;">IGroupService.cs</div>
<svg class="a" style="left:1060.4px;top:215.49999999999997px;" width="5.6" height="8.8" viewBox="0 0 5.6 8.8"><path d="M.7.9v7l4-3.5z" fill="none" stroke="#1e1e1e" stroke-width="1.1" stroke-linejoin="round"/></svg>
<svg class="a" style="left:1079.1999999999998px;top:216.29999999999998px;" width="13.2" height="7.4" viewBox="0 0 13.2 7.4"><path d="M5.3 1.5A2.9 2.9 0 1 0 5.3 5.9" fill="none" stroke="#3d9142" stroke-width="1.4"/><path d="M7.8 2.6h4.6M7.8 4.8h4.6M9 1.2v5M11.2 1.2v5" stroke="#3d9142" stroke-width="1.1"/></svg>
<div class="t" style="left:1097.40px;top:211.70px;height:16px;line-height:16px;font-size:11.2px;color:#323238;letter-spacing:-0.745px;">INewsService.cs</div>
<svg class="a" style="left:1044.4px;top:232.33999999999997px;" width="5.6" height="8.8" viewBox="0 0 5.6 8.8"><path d="M.7.9v7l4-3.5z" fill="none" stroke="#1e1e1e" stroke-width="1.1" stroke-linejoin="round"/></svg>
<svg class="a" style="left:1063.6px;top:233.14px;" width="13.2" height="7.4" viewBox="0 0 13.2 7.4"><path d="M5.3 1.5A2.9 2.9 0 1 0 5.3 5.9" fill="none" stroke="#3d9142" stroke-width="1.4"/><path d="M7.8 2.6h4.6M7.8 4.8h4.6M9 1.2v5M11.2 1.2v5" stroke="#3d9142" stroke-width="1.1"/></svg>
<div class="t" style="left:1081.50px;top:228.54px;height:16px;line-height:16px;font-size:11.2px;color:#323238;letter-spacing:-0.672px;">GroupService.cs</div>
<svg class="a" style="left:1044.4px;top:249.17999999999998px;" width="5.6" height="8.8" viewBox="0 0 5.6 8.8"><path d="M.7.9v7l4-3.5z" fill="none" stroke="#1e1e1e" stroke-width="1.1" stroke-linejoin="round"/></svg>
<svg class="a" style="left:1063.6px;top:249.98px;" width="13.2" height="7.4" viewBox="0 0 13.2 7.4"><path d="M5.3 1.5A2.9 2.9 0 1 0 5.3 5.9" fill="none" stroke="#3d9142" stroke-width="1.4"/><path d="M7.8 2.6h4.6M7.8 4.8h4.6M9 1.2v5M11.2 1.2v5" stroke="#3d9142" stroke-width="1.1"/></svg>
<div class="t" style="left:1081.50px;top:245.38px;height:16px;line-height:16px;font-size:11.2px;color:#323238;letter-spacing:-0.726px;">NewsService.cs</div>
<svg class="a" style="left:1013.4px;top:267.91999999999996px;" width="5.6" height="5.6" viewBox="0 0 5.6 5.6"><path d="M5.3.5v4.8H.5z" fill="#1e1e1e" stroke="#1e1e1e" stroke-width=".5" stroke-linejoin="round"/></svg>
<svg class="a" style="left:1032.8px;top:265.02px;" width="12.8" height="10.8" viewBox="0 0 12.8 10.8"><rect x=".5" y=".5" width="11.8" height="9.8" rx="1" fill="#f4f7f4" stroke="#6f7480" stroke-width="1"/><path d="M5.2 3.4A2.1 2.1 0 1 0 5.2 7.4" fill="none" stroke="#3d9142" stroke-width="1.3"/><path d="M6.6 4.3h4M6.6 6.2h4" stroke="#3d9142" stroke-width="1.3"/></svg>
<div class="t" style="left:1050.30px;top:262.22px;height:16px;line-height:16px;font-size:11.2px;color:#323238;letter-spacing:-0.528px;">TestProject.DataLayer</div>
<svg class="a" style="left:1028.4px;top:282.86px;" width="5.6" height="8.8" viewBox="0 0 5.6 8.8"><path d="M.7.9v7l4-3.5z" fill="none" stroke="#1e1e1e" stroke-width="1.1" stroke-linejoin="round"/></svg>
<svg class="a" style="left:1047.2px;top:282.46px;" width="14" height="9.6" viewBox="0 0 14 9.6"><rect x="8" y=".6" width="5.2" height="3.6" fill="none" stroke="#3a3f55" stroke-width="1"/><rect x="7" y="5.4" width="5.2" height="3.6" fill="none" stroke="#3a3f55" stroke-width="1"/><circle cx="2.8" cy="4.8" r="2.1" fill="none" stroke="#3a3f55" stroke-width="1"/><path d="M4.6 3.8 8 2.6M4.8 5.6l2.2 1.2M0 4.8h1" stroke="#3a3f55" stroke-width="1"/></svg>
<div class="t" style="left:1066.30px;top:279.06px;height:16px;line-height:16px;font-size:11.2px;color:#323238;letter-spacing:-0.492px;">Dependencies</div>
<svg class="a" style="left:1028.4px;top:299.70000000000005px;" width="5.6" height="8.8" viewBox="0 0 5.6 8.8"><path d="M.7.9v7l4-3.5z" fill="none" stroke="#1e1e1e" stroke-width="1.1" stroke-linejoin="round"/></svg>
<svg class="a" style="left:1047.6px;top:299.20000000000005px;" width="13.2" height="10" viewBox="0 0 13.2 10"><path d="M.5 9.5V1.2a.7.7 0 0 1 .7-.7h3.6l1.1 1.2h6.1a.7.7 0 0 1 .7.7v7.1z" fill="#d9bd79" stroke="#b3945a" stroke-width="1"/><path d="M.9 3.2h11.4" stroke="#c6a764" stroke-width=".8"/></svg>
<div class="t" style="left:1066.30px;top:295.90px;height:16px;line-height:16px;font-size:11.2px;color:#323238;letter-spacing:-0.457px;">Context</div>
<svg class="a" style="left:1029.4px;top:318.44px;" width="5.6" height="5.6" viewBox="0 0 5.6 5.6"><path d="M5.3.5v4.8H.5z" fill="#1e1e1e" stroke="#1e1e1e" stroke-width=".5" stroke-linejoin="round"/></svg>
<svg class="a" style="left:1047.6px;top:316.04px;" width="13.2" height="10" viewBox="0 0 13.2 10"><path d="M.5 9.5V1.2a.7.7 0 0 1 .7-.7h3.6l1.1 1.2h6.1a.7.7 0 0 1 .7.7v7.1z" fill="#d9bd79" stroke="#b3945a" stroke-width="1"/><path d="M.9 3.2h11.4" stroke="#c6a764" stroke-width=".8"/></svg>
<div class="t" style="left:1066.30px;top:312.74px;height:16px;line-height:16px;font-size:11.2px;color:#323238;letter-spacing:-0.441px;">Entities</div>
<svg class="a" style="left:1045.4px;top:335.28px;" width="5.6" height="5.6" viewBox="0 0 5.6 5.6"><path d="M5.3.5v4.8H.5z" fill="#1e1e1e" stroke="#1e1e1e" stroke-width=".5" stroke-linejoin="round"/></svg>
<svg class="a" style="left:1064.0px;top:332.88px;" width="13.2" height="10" viewBox="0 0 13.2 10"><path d="M.5 9.5V1.2a.7.7 0 0 1 .7-.7h3.6l1.1 1.2h6.1a.7.7 0 0 1 .7.7v7.1z" fill="#d9bd79" stroke="#b3945a" stroke-width="1"/><path d="M.9 3.2h11.4" stroke="#c6a764" stroke-width=".8"/></svg>
<div class="t" style="left:1081.50px;top:329.58px;height:16px;line-height:16px;font-size:11.2px;color:#323238;letter-spacing:-0.525px;">Group</div>
<svg class="a" style="left:1060.4px;top:350.22px;" width="5.6" height="8.8" viewBox="0 0 5.6 8.8"><path d="M.7.9v7l4-3.5z" fill="none" stroke="#1e1e1e" stroke-width="1.1" stroke-linejoin="round"/></svg>
<svg class="a" style="left:1079.1999999999998px;top:351.02px;" width="13.2" height="7.4" viewBox="0 0 13.2 7.4"><path d="M5.3 1.5A2.9 2.9 0 1 0 5.3 5.9" fill="none" stroke="#3d9142" stroke-width="1.4"/><path d="M7.8 2.6h4.6M7.8 4.8h4.6M9 1.2v5M11.2 1.2v5" stroke="#3d9142" stroke-width="1.1"/></svg>
<div class="t" style="left:1097.40px;top:346.42px;height:16px;line-height:16px;font-size:11.2px;color:#323238;letter-spacing:-0.680px;">Group.cs</div>
<svg class="a" style="left:1045.4px;top:368.96px;" width="5.6" height="5.6" viewBox="0 0 5.6 5.6"><path d="M5.3.5v4.8H.5z" fill="#1e1e1e" stroke="#1e1e1e" stroke-width=".5" stroke-linejoin="round"/></svg>
<svg class="a" style="left:1064.0px;top:366.56px;" width="13.2" height="10" viewBox="0 0 13.2 10"><path d="M.5 9.5V1.2a.7.7 0 0 1 .7-.7h3.6l1.1 1.2h6.1a.7.7 0 0 1 .7.7v7.1z" fill="#d9bd79" stroke="#b3945a" stroke-width="1"/><path d="M.9 3.2h11.4" stroke="#c6a764" stroke-width=".8"/></svg>
<div class="t" style="left:1081.50px;top:363.26px;height:16px;line-height:16px;font-size:11.2px;color:#323238;letter-spacing:-0.751px;">News</div>
<svg class="a" style="left:1060.4px;top:383.9px;" width="5.6" height="8.8" viewBox="0 0 5.6 8.8"><path d="M.7.9v7l4-3.5z" fill="none" stroke="#1e1e1e" stroke-width="1.1" stroke-linejoin="round"/></svg>
<svg class="a" style="left:1079.1999999999998px;top:384.69999999999993px;" width="13.2" height="7.4" viewBox="0 0 13.2 7.4"><path d="M5.3 1.5A2.9 2.9 0 1 0 5.3 5.9" fill="none" stroke="#3d9142" stroke-width="1.4"/><path d="M7.8 2.6h4.6M7.8 4.8h4.6M9 1.2v5M11.2 1.2v5" stroke="#3d9142" stroke-width="1.1"/></svg>
<div class="t" style="left:1097.40px;top:380.10px;height:16px;line-height:16px;font-size:11.2px;color:#323238;letter-spacing:-0.831px;">News.cs</div>
</div></div>
<div class="a" style="left:1003.8px;top:394px;width:276.20000000000005px;height:15.2px;background:#ececf3;"></div>
<svg class="a" style="left:1009.2px;top:398.4px;" width="4.4" height="7" viewBox="0 0 4.4 7"><path d="M4.4 0v7L0 3.5z" fill="#8e8e96"/></svg>
<div class="a" style="left:1018px;top:398.3px;width:240.8px;height:7.2px;background:#c5c4cc;"></div>
<div class="a" style="left:1003.8px;top:409.2px;width:88.2px;height:16.6px;background:#ffffff;"></div>
<div class="t" style="left:1008.00px;top:410.20px;height:16px;line-height:16px;font-size:11.2px;color:#1e1e1e;letter-spacing:-0.353px;word-spacing:0.212px;">Solution Explorer</div>
<div class="a" style="left:1092px;top:409.2px;width:65px;height:16.6px;background:#4a5c96;"></div>
<div class="t" style="left:1097.80px;top:410.20px;height:16px;line-height:16px;font-size:11.2px;color:#ffffff;letter-spacing:-0.707px;word-spacing:0.424px;">Git Changes</div>
<!-- s_props -->
<div class="a" style="left:1003.8px;top:432.8px;width:276.20000000000005px;height:18.8px;background:#40548c;"></div>
<div class="t" style="left:1006.60px;top:434.40px;height:16px;line-height:16px;font-size:11.2px;color:#ffffff;letter-spacing:-0.444px;">Properties</div>
<svg class="a" style="left:1263.60px;top:440.80px" width="6.8" height="4" viewBox="0 0 6.8 4"><path d="M0 0h6.8L3.4 4z" fill="#cfd7f2"/></svg>
<div class="a" style="left:1278.6px;top:438px;width:1.4px;height:9px;background:#aebbe3;"></div>
<div class="a" style="left:1003.8px;top:451.6px;width:276.20000000000005px;height:244px;background:#fcfcff;"></div>
<div class="a" style="left:1003.8px;top:472.2px;width:276.20000000000005px;height:21.4px;background:#cfd5f2;"></div>
<div class="a" style="left:1005.6px;top:472.8px;width:20.4px;height:19.8px;background:#fdefd0;border:1px solid #bfad84;border-radius:2px"></div>
<svg class="a" style="left:1009.4px;top:476px;" width="13" height="13" viewBox="0 0 13 13"><rect x=".4" y=".8" width="3.6" height="3.6" fill="#2e2e3a"/><rect x=".4" y="7.6" width="3.6" height="3.6" fill="#2e2e3a"/><path d="M1.2 2.6h2M2.2 1.6v2M1.2 9.4h2M2.2 8.4v2" stroke="#fff" stroke-width=".7"/><rect x="5.4" y="0" width="2.8" height="9.2" fill="#8587ad"/><rect x="8.8" y="1.6" width="2.8" height="7.6" fill="#a2a5c6"/><path d="M5.4 10.8h3.2M9.4 10.8h1.4M11.4 10.8h1" stroke="#5a5d80" stroke-width="1.2"/></svg>
<svg class="a" style="left:1029.4px;top:476.2px;" width="15" height="13" viewBox="0 0 15 13"><rect x=".2" y=".2" width="6" height="6" rx=".6" fill="#3a3a46"/><text x="1" y="5.4" font-family="Liberation Sans" font-size="6.2" font-weight="bold" fill="#ffffff">A</text><text x=".9" y="12.4" font-family="Liberation Sans" font-size="7" font-weight="bold" fill="#1e1e26">Z</text><path d="M10.6 1v8.6" stroke="#1f6fc0" stroke-width="2"/><path d="M7 6.6l3.6 3.8 3.6-3.8" fill="none" stroke="#1f6fc0" stroke-width="2"/></svg>
<div class="a" style="left:1048.5px;top:474.6px;width:1px;height:16.6px;background:#a3abcb;"></div>
<svg class="a" style="left:1054.6px;top:477px;" width="12.6" height="12.6" viewBox="0 0 12.6 12.6"><path d="M11.6 3 9.4 5.2 7.4 3.2l2.2-2.2a3.4 3.4 0 0 0-4.300000000000001 4.300000000000001L.8 9.8a1.4 1.4 0 0 0 2 2l4.5-4.5A3.4 3.4 0 0 0 11.6 3z" fill="#9a9fb8"/></svg>
<div class="a" style="left:1003.8px;top:639.4px;width:276.20000000000005px;height:1px;background:#f1f1f8;"></div>
<!-- s_status -->
<div class="a" style="left:0px;top:701.4px;width:1280px;height:18.6px;background:#3f5189;"></div>
<div class="t" style="left:-8.60px;top:703.20px;height:16px;line-height:16px;font-size:11.2px;color:#ffffff;letter-spacing:-0.655px;">Ready</div>
<svg class="a" style="left:1001.4px;top:705.6px;" width="10" height="11.4" viewBox="0 0 10 11.4"><path d="M5 11.2V.9M.6 5.3 5 .9l4.4 4.4" fill="none" stroke="#fff" stroke-width="1.1"/></svg>
<div class="t" style="left:1019.00px;top:703.60px;height:16px;line-height:16px;font-size:11.2px;color:#ffffff;letter-spacing:-0.343px;word-spacing:0.206px;">Add to Source Control</div>
<svg class="a" style="left:1129.4px;top:710px;" width="6.4" height="3.6" viewBox="0 0 6.4 3.6"><path d="M0 3.6 3.2 0l3.2 3.6z" fill="#fff"/></svg>
<svg class="a" style="left:1155px;top:706px;" width="11" height="11" viewBox="0 0 11 11"><path d="M.6.8h9.8v2.4H.6zM1.6 3.2v7h7.8v-7" fill="none" stroke="#fff" stroke-width="1.1"/><path d="M3.8 5.2v3h3.4v-3" fill="none" stroke="#fff" stroke-width="1.1"/></svg>
<div class="t" style="left:1173.00px;top:703.60px;height:16px;line-height:16px;font-size:11.2px;color:#ffffff;letter-spacing:-0.437px;word-spacing:0.262px;">Select Repository</div>
<svg class="a" style="left:1259.4px;top:710px;" width="6.4" height="3.6" viewBox="0 0 6.4 3.6"><path d="M0 3.6 3.2 0l3.2 3.6z" fill="#fff"/></svg>
</body>
</html>
